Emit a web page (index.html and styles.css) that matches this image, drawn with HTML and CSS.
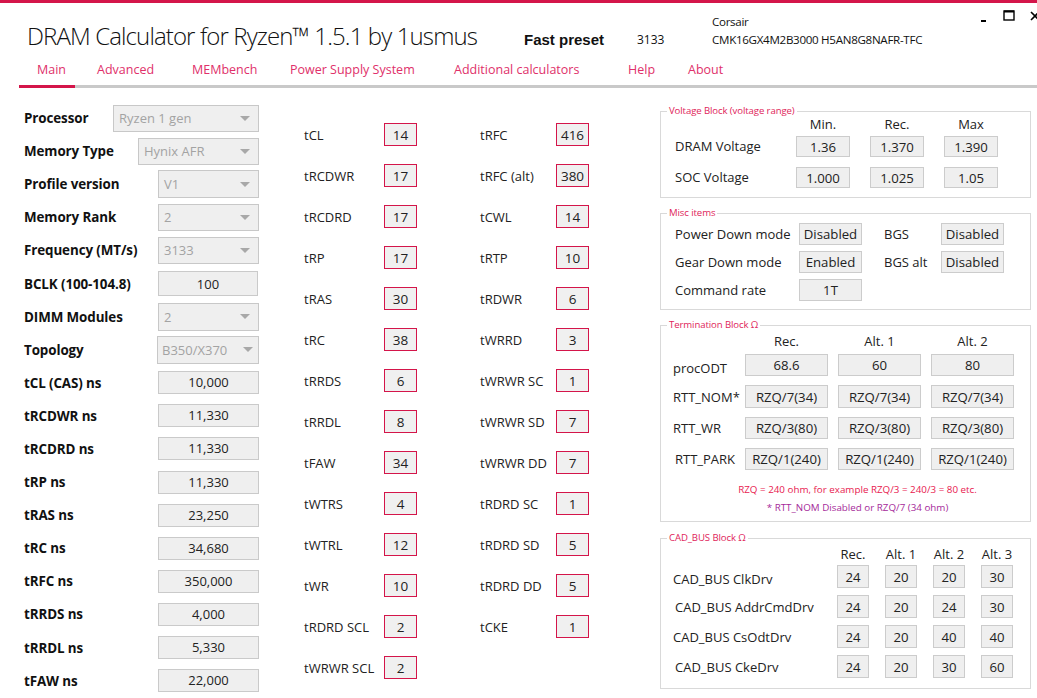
FILE: index.html
```html
<!DOCTYPE html>
<html>
<head>
<meta charset="utf-8">
<title>DRAM Calculator for Ryzen</title>
<link rel="stylesheet" href="styles.css">
</head>
<body>
<div class="topbar"></div>
<header class="header">
  <h1 class="title">DRAM Calculator for Ryzen™ 1.5.1 by 1usmus</h1>
  <div class="preset">Fast preset</div>
  <div class="freq">3133</div>
  <div class="module"><div>Corsair</div><div>CMK16GX4M2B3000 H5AN8G8NAFR-TFC</div></div>
  <div class="winctl">
    <svg class="wmin" width="8" height="8" viewBox="0 0 8 8"><rect x="1" y="5" width="5" height="2" fill="#000"/></svg>
    <svg class="wmax" width="12" height="11" viewBox="0 0 12 11"><rect x="1" y="1" width="10" height="9" fill="none" stroke="#000" stroke-width="1.4"/><rect x="1" y="0.5" width="10" height="2" fill="#000"/></svg>
    <svg class="wclose" width="10" height="10" viewBox="0 0 10 10"><path d="M1 1 L9 9 M9 1 L1 9" stroke="#000" stroke-width="1.6"/></svg>
  </div>
</header>
<nav class="tabs">
  <span class="tab active">Main</span>
  <span class="tab">Advanced</span>
  <span class="tab">MEMbench</span>
  <span class="tab">Power Supply System</span>
  <span class="tab">Additional calculators</span>
  <span class="tab">Help</span>
  <span class="tab">About</span>
</nav>
<main class="main">
  <section class="left">
    <div class="row"><span class="lbl">Processor</span><div class="dd w146 h27"><span>Ryzen 1 gen</span><i class="arrow"></i></div></div>
    <div class="row"><span class="lbl">Memory Type</span><div class="dd w121 h27"><span>Hynix AFR</span><i class="arrow"></i></div></div>
    <div class="row"><span class="lbl">Profile version</span><div class="dd w101 h28"><span>V1</span><i class="arrow"></i></div></div>
    <div class="row"><span class="lbl">Memory Rank</span><div class="dd w101 h27"><span>2</span><i class="arrow"></i></div></div>
    <div class="row"><span class="lbl">Frequency (MT/s)</span><div class="dd w101 h27"><span>3133</span><i class="arrow"></i></div></div>
    <div class="row"><span class="lbl">BCLK (100-104.8)</span><div class="nbox bclk">100</div></div>
    <div class="row"><span class="lbl">DIMM Modules</span><div class="dd w101 h28"><span>2</span><i class="arrow"></i></div></div>
    <div class="row"><span class="lbl">Topology</span><div class="dd w102 h28 topo"><span>B350/X370</span><i class="arrow"></i></div></div>
    <div class="row"><span class="lbl">tCL (CAS) ns</span><div class="nbox">10,000</div></div>
    <div class="row"><span class="lbl">tRCDWR ns</span><div class="nbox">11,330</div></div>
    <div class="row"><span class="lbl">tRCDRD ns</span><div class="nbox">11,330</div></div>
    <div class="row"><span class="lbl">tRP ns</span><div class="nbox">11,330</div></div>
    <div class="row"><span class="lbl">tRAS ns</span><div class="nbox">23,250</div></div>
    <div class="row"><span class="lbl">tRC ns</span><div class="nbox">34,680</div></div>
    <div class="row"><span class="lbl">tRFC ns</span><div class="nbox">350,000</div></div>
    <div class="row"><span class="lbl">tRRDS ns</span><div class="nbox">4,000</div></div>
    <div class="row"><span class="lbl">tRRDL ns</span><div class="nbox">5,330</div></div>
    <div class="row"><span class="lbl">tFAW ns</span><div class="nbox">22,000</div></div>
  </section>

  <section class="mid">
    <div class="tcol">
      <span class="tl">tCL</span><span class="tb">14</span>
      <span class="tl">tRCDWR</span><span class="tb">17</span>
      <span class="tl">tRCDRD</span><span class="tb">17</span>
      <span class="tl">tRP</span><span class="tb">17</span>
      <span class="tl">tRAS</span><span class="tb">30</span>
      <span class="tl">tRC</span><span class="tb">38</span>
      <span class="tl">tRRDS</span><span class="tb">6</span>
      <span class="tl">tRRDL</span><span class="tb">8</span>
      <span class="tl">tFAW</span><span class="tb">34</span>
      <span class="tl">tWTRS</span><span class="tb">4</span>
      <span class="tl">tWTRL</span><span class="tb">12</span>
      <span class="tl">tWR</span><span class="tb">10</span>
      <span class="tl">tRDRD SCL</span><span class="tb">2</span>
      <span class="tl">tWRWR SCL</span><span class="tb">2</span>
    </div>
    <div class="tcol c2">
      <span class="tl">tRFC</span><span class="tb">416</span>
      <span class="tl">tRFC (alt)</span><span class="tb">380</span>
      <span class="tl">tCWL</span><span class="tb">14</span>
      <span class="tl">tRTP</span><span class="tb">10</span>
      <span class="tl">tRDWR</span><span class="tb">6</span>
      <span class="tl">tWRRD</span><span class="tb">3</span>
      <span class="tl">tWRWR SC</span><span class="tb">1</span>
      <span class="tl">tWRWR SD</span><span class="tb">7</span>
      <span class="tl">tWRWR DD</span><span class="tb">7</span>
      <span class="tl">tRDRD SC</span><span class="tb">1</span>
      <span class="tl">tRDRD SD</span><span class="tb">5</span>
      <span class="tl">tRDRD DD</span><span class="tb">5</span>
      <span class="tl">tCKE</span><span class="tb">1</span>
    </div>
  </section>

  <section class="right">
    <div class="group volt">
      <span class="legend">Voltage Block (voltage range)</span>
      <div class="vgrid">
        <span></span><span class="hd">Min.</span><span class="hd">Rec.</span><span class="hd">Max</span>
        <span class="rl">DRAM Voltage</span><span class="gb">1.36</span><span class="gb">1.370</span><span class="gb">1.390</span>
        <span class="rl">SOC Voltage</span><span class="gb">1.000</span><span class="gb">1.025</span><span class="gb">1.05</span>
      </div>
    </div>

    <div class="group misc">
      <span class="legend">Misc items</span>
      <div class="mgrid">
        <span class="rl">Power Down mode</span><span class="gb">Disabled</span><span class="rl2">BGS</span><span class="gb">Disabled</span>
        <span class="rl">Gear Down mode</span><span class="gb">Enabled</span><span class="rl2">BGS alt</span><span class="gb">Disabled</span>
        <span class="rl">Command rate</span><span class="gb">1T</span>
      </div>
    </div>

    <div class="group term">
      <span class="legend">Termination Block Ω</span>
      <div class="tgrid">
        <span></span><span class="hd">Rec.</span><span class="hd">Alt. 1</span><span class="hd">Alt. 2</span>
        <span class="rl low">procODT</span><span class="gb">68.6</span><span class="gb">60</span><span class="gb">80</span>
        <span class="rl">RTT_NOM*</span><span class="gb">RZQ/7(34)</span><span class="gb">RZQ/7(34)</span><span class="gb">RZQ/7(34)</span>
        <span class="rl">RTT_WR</span><span class="gb">RZQ/3(80)</span><span class="gb">RZQ/3(80)</span><span class="gb">RZQ/3(80)</span>
        <span class="rl ind">RTT_PARK</span><span class="gb">RZQ/1(240)</span><span class="gb">RZQ/1(240)</span><span class="gb">RZQ/1(240)</span>
      </div>
      <p class="note red">RZQ = 240 ohm, for example RZQ/3 = 240/3 = 80 etc.</p>
      <p class="note purple">* RTT_NOM Disabled or RZQ/7 (34 ohm)</p>
    </div>

    <div class="group cad">
      <span class="legend">CAD_BUS Block Ω</span>
      <div class="cgrid">
        <span></span><span class="hd">Rec.</span><span class="hd">Alt. 1</span><span class="hd">Alt. 2</span><span class="hd">Alt. 3</span>
        <span class="rl low">CAD_BUS ClkDrv</span><span class="gb">24</span><span class="gb">20</span><span class="gb">20</span><span class="gb">30</span>
        <span class="rl ind">CAD_BUS AddrCmdDrv</span><span class="gb">24</span><span class="gb">20</span><span class="gb">24</span><span class="gb">30</span>
        <span class="rl">CAD_BUS CsOdtDrv</span><span class="gb">24</span><span class="gb">20</span><span class="gb">40</span><span class="gb">40</span>
        <span class="rl ind">CAD_BUS CkeDrv</span><span class="gb">24</span><span class="gb">20</span><span class="gb">30</span><span class="gb">60</span>
      </div>
    </div>
  </section>
</main>
</body>
</html>
```

FILE: styles.css
```css
html, body {
  margin: 0;
  padding: 0;
  background: #ffffff;
  font-family: "Open Sans", "Noto Sans", "DejaVu Sans", sans-serif;
  color: #1a1a1a;
  width: 1037px;
  height: 698px;
  overflow: hidden;
}

.topbar {
  height: 3px;
  background: #d4154a;
}

.header {
  display: grid;
  grid-template-columns: 497px 113px 75px 1fr auto;
  align-items: start;
  padding-left: 27px;
  height: 55px;
  box-sizing: border-box;
}

.title {
  margin: 18px 0 0 0;
  font-weight: 300;
  font-size: 24px;
  line-height: 30px;
  color: #111;
  white-space: nowrap;
  letter-spacing: -0.88px;
}

.preset {
  margin-top: 28px;
  font-family: "Liberation Sans", Arial, sans-serif;
  font-weight: 700;
  font-size: 15px;
  line-height: 18px;
  color: #111;
}

.freq {
  margin-top: 29px;
  font-size: 12px;
  line-height: 16px;
  color: #111;
}

.module {
  margin-top: 10px;
  font-size: 11.6px;
  line-height: 18px;
  color: #111;
  letter-spacing: -0.3px;
}

.winctl {
  display: flex;
  align-items: flex-start;
  margin-top: 6px;
}

.wmin { margin-top: 6px; margin-right: 15px; }
.wmax { margin-top: 1px; margin-right: 15px; }
.wclose { margin-top: 2px; margin-right: -3px; }

.tabs {
  display: grid;
  grid-template-columns: 60px 95px 98px 164px 174px 60px 1fr;
  margin-left: 19px;
  padding-top: 1px;
  border-bottom: 3px solid #c9c9c9;
}

.tab {
  position: relative;
  padding: 0 0 4px 18px;
  font-size: 12.5px;
  line-height: 22px;
  color: #e0306a;
  white-space: nowrap;
}

.tab.active::after {
  content: "";
  position: absolute;
  left: 0;
  bottom: -3px;
  width: 56px;
  height: 3px;
  background: #d4154a;
}

.main {
  display: flex;
  align-items: flex-start;
  padding-left: 24px;
}

/* left column */
.left {
  width: 235px;
  margin-right: 45px;
  padding-top: 13.5px;
}

.row {
  display: flex;
  align-items: center;
  justify-content: space-between;
  height: 33.1px;
}

.lbl {
  font-weight: 700;
  font-size: 13.4px;
  color: #111;
  white-space: nowrap;
  letter-spacing: -0.1px;
}

.dd {
  display: flex;
  align-items: center;
  box-sizing: border-box;
  border: 1px solid #c8c8c8;
  background: #efefef;
  color: #a3a3a3;
  font-size: 13px;
  padding-left: 5px;
}

.w146 { width: 146px; }
.w121 { width: 121px; }
.w101 { width: 101px; }
.w102 { width: 102px; }
.h27 { height: 27px; }
.h28 { height: 28px; }

.topo { padding-left: 4px; }

.arrow {
  margin-left: auto;
  margin-right: 8px;
  width: 0;
  height: 0;
  border-left: 5px solid transparent;
  border-right: 5px solid transparent;
  border-top: 5px solid #a8a8a8;
}

.topo .arrow { margin-right: 5px; }

.nbox {
  width: 101px;
  height: 23px;
  box-sizing: border-box;
  border: 1px solid #cacaca;
  background: #efefef;
  text-align: center;
  font-size: 13px;
  line-height: 21px;
  color: #222;
}

.nbox.bclk {
  width: 100px;
  height: 25px;
  line-height: 25px;
  margin-right: 1px;
}

/* middle timings */
.mid {
  display: flex;
  gap: 63px;
  width: 285px;
  margin-right: 71px;
  padding-top: 25.5px;
}

.tcol {
  display: grid;
  grid-template-columns: 80px 33px;
  grid-auto-rows: 41px;
  align-items: center;
}

.tcol.c2 {
  grid-template-columns: 76px 33px;
}

.tl {
  font-size: 13px;
  color: #222;
  white-space: nowrap;
  padding-top: 2px;
}

.tb {
  height: 23px;
  box-sizing: border-box;
  border: 1px solid #d4154a;
  background: #f0f0f0;
  text-align: center;
  font-size: 13.5px;
  line-height: 22px;
  color: #222;
}

/* right column */
.right {
  width: 371px;
  padding-top: 23px;
}

.group {
  position: relative;
  border: 1px solid #d9d9d9;
  box-sizing: border-box;
}

.legend {
  position: absolute;
  top: -8px;
  left: 6px;
  padding: 0 2px;
  background: #fff;
  font-size: 9.6px;
  line-height: 14px;
  color: #e0245a;
  white-space: nowrap;
  letter-spacing: -0.1px;
}

.hd {
  text-align: center;
  font-size: 13px;
  line-height: 14px;
  color: #222;
}

.rl, .rl2 {
  font-size: 13px;
  color: #222;
  white-space: nowrap;
}

.rl2 { padding-left: 22px; }

.rl.low { padding-top: 5px; }
.rl.ind { padding-left: 2px; }

.gb {
  box-sizing: border-box;
  border: 1px solid #cccccc;
  background: #efefef;
  text-align: center;
  font-size: 13.2px;
  color: #222;
  display: flex;
  align-items: center;
  justify-content: center;
  white-space: nowrap;
}

.volt {
  height: 87px;
  padding: 5px 0 0 14px;
}

.vgrid {
  display: grid;
  grid-template-columns: 101px 54px 54px 54px;
  grid-template-rows: 14px 26px 31px;
  column-gap: 20px;
  align-items: end;
}

.vgrid .gb { height: 21px; }
.vgrid .rl { line-height: 21px; }

.misc {
  margin-top: 15px;
  height: 97px;
  padding: 9px 0 0 14px;
}

.mgrid {
  display: grid;
  grid-template-columns: 124px 63px 79px 63px;
  grid-auto-rows: 22px;
  row-gap: 6px;
  align-items: center;
}

.mgrid .gb { height: 22px; }

.term {
  margin-top: 15px;
  height: 197px;
  padding: 10px 0 0 12px;
}

.tgrid {
  display: grid;
  grid-template-columns: 62px 83px 83px 83px;
  grid-template-rows: 9px 22px 23px 22px 22px;
  column-gap: 10px;
  row-gap: 9px;
  align-items: center;
}

.tgrid .gb { height: 100%; }

.note {
  margin: 0;
  text-align: center;
  padding-left: 12px;
  font-size: 9.8px;
  line-height: 18px;
  white-space: nowrap;
}

.note.red { margin-top: 11px; color: #e8204f; }
.note.purple { color: #a52a9a; }

.cad {
  margin-top: 16px;
  height: 151px;
  padding: 10px 0 0 12px;
}

.cgrid {
  display: grid;
  grid-template-columns: 148px 32px 32px 32px 32px;
  grid-template-rows: 9px 23px 23px 23px 23px;
  column-gap: 16px;
  row-gap: 7px;
  align-items: center;
}

.cgrid .gb { height: 23px; }
```
